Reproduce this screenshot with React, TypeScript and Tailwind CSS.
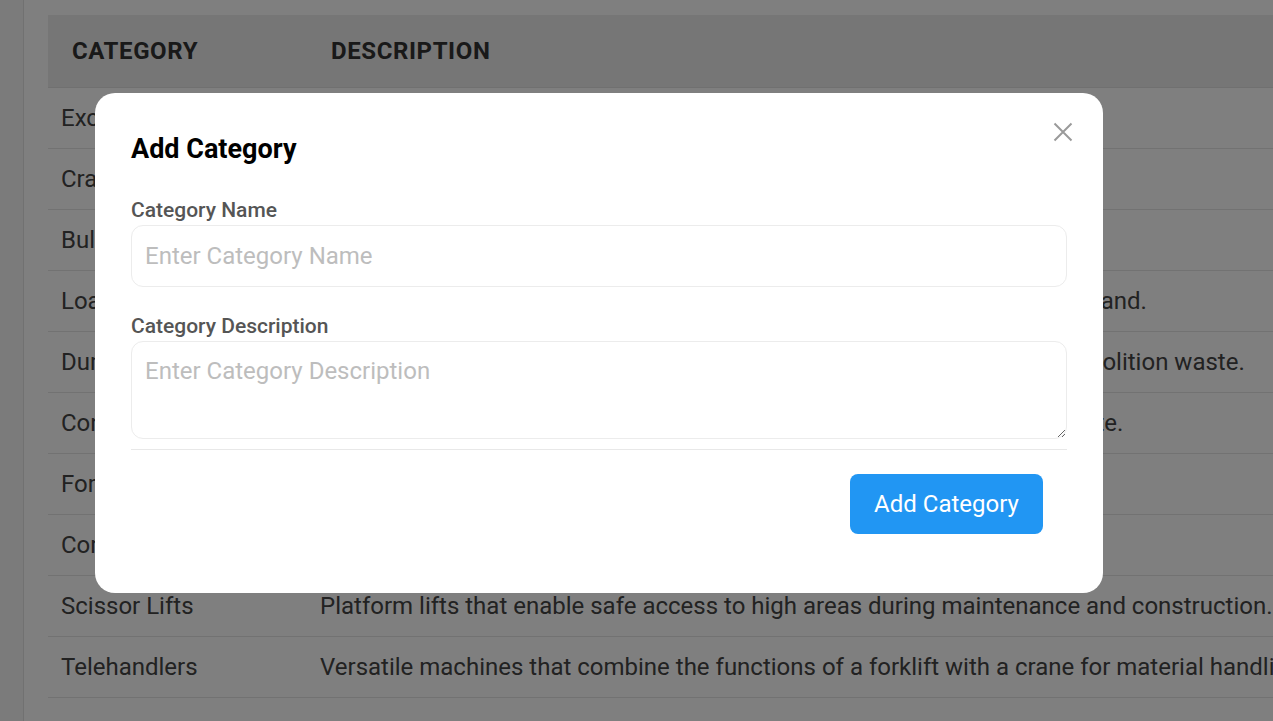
const rows = [
  { name: "Excavators", description: "Heavy machines used for digging and earthmoving on construction sites." },
  { name: "Cranes", description: "Lifting equipment used to move heavy materials on job sites." },
  { name: "Bulldozers", description: "Powerful tracked machines used for pushing soil and rubble." },
  { name: "Loaders", description: "Machines designed to scoop and move materials like gravel, debris, and sand." },
  { name: "Dump Trucks", description: "Heavy trucks used for transporting loose material like sand, gravel or demolition waste." },
  { name: "Concrete Mixers", description: "Equipment that combines cement, sand, gravel, and water to form concrete." },
  { name: "Forklifts", description: "Industrial trucks used to lift and move materials over short distances." },
  { name: "Compactors", description: "Machines used to compress soil, gravel and asphalt for a stable base." },
  { name: "Scissor Lifts", description: "Platform lifts that enable safe access to high areas during maintenance and construction." },
  { name: "Telehandlers", description: "Versatile machines that combine the functions of a forklift with a crane for material handling." },
]

export default function App() {
  return (
    <div className="relative h-[721px] w-[1273px] overflow-hidden bg-white font-['Roboto',sans-serif]">
      <div className="flex h-full">
        {/* sidebar */}
        <div className="w-[24px] shrink-0 border-r border-[#e2e2e2] bg-[#f6f6f6]" />

        {/* content */}
        <div className="flex-1 overflow-hidden pl-[24px] pt-[15px]">
          <table className="w-[1400px] table-fixed border-collapse text-left">
            <thead>
              <tr className="h-[72px] border-b border-[#e0e0e0] bg-[#ececec]">
                <th className="w-[259px] px-[24px] text-[24px] font-bold uppercase tracking-wide text-[#333]">Category</th>
                <th className="px-[24px] text-[24px] font-bold uppercase tracking-wide text-[#333]">Description</th>
              </tr>
            </thead>
            <tbody>
              {rows.map((row) => (
                <tr key={row.name} className="h-[61px] border-b border-[#e4e4e4]">
                  <td className="whitespace-nowrap px-[13px] text-[24px] text-[#444]">{row.name}</td>
                  <td className="whitespace-nowrap px-[13px] text-[24px] text-[#444]">{row.description}</td>
                </tr>
              ))}
            </tbody>
          </table>
        </div>
      </div>

      {/* overlay */}
      <div className="absolute inset-0 bg-black/50" />

      {/* modal */}
      <div className="absolute left-[95px] top-[93px] w-[1008px] rounded-[20px] bg-white px-[36px] pb-[59px] pt-[36px]">
        <button className="absolute left-[958px] top-[29px] text-[#9a9a9a]">
          <svg width="20" height="20" viewBox="0 0 20 20" fill="none" stroke="currentColor" strokeWidth="2">
            <path d="M1.5 1.5 L18.5 18.5 M18.5 1.5 L1.5 18.5" />
          </svg>
        </button>
        <h2 className="text-[27px] font-bold leading-[40px] text-black">Add Category</h2>

        <div className="mt-[29px] flex flex-col">
          <label className="text-[21px] font-medium leading-[24px] text-[#555]">Category Name</label>
          <input
            placeholder="Enter Category Name"
            className="mt-[3px] h-[62px] rounded-[12px] border border-[#ececec] px-[13px] text-[24px] text-[#333] outline-none placeholder:text-[#bdbdbd]"
          />
        </div>

        <div className="mt-[27px] flex flex-col">
          <label className="text-[21px] font-medium leading-[24px] text-[#555]">Category Description</label>
          <textarea
            placeholder="Enter Category Description"
            className="mt-[3px] h-[98px] rounded-[12px] border border-[#ececec] px-[13px] pt-[13px] text-[24px] leading-[32px] text-[#333] outline-none placeholder:text-[#bdbdbd]"
          />
        </div>

        <div className="mt-[10px] border-t border-[#e8e8e8] pt-[24px]">
          <div className="flex justify-end pr-[24px]">
            <button className="h-[60px] w-[193px] rounded-[8px] bg-[#2196f3] text-[24px] text-white">Add Category</button>
          </div>
        </div>
      </div>
    </div>
  )
}
